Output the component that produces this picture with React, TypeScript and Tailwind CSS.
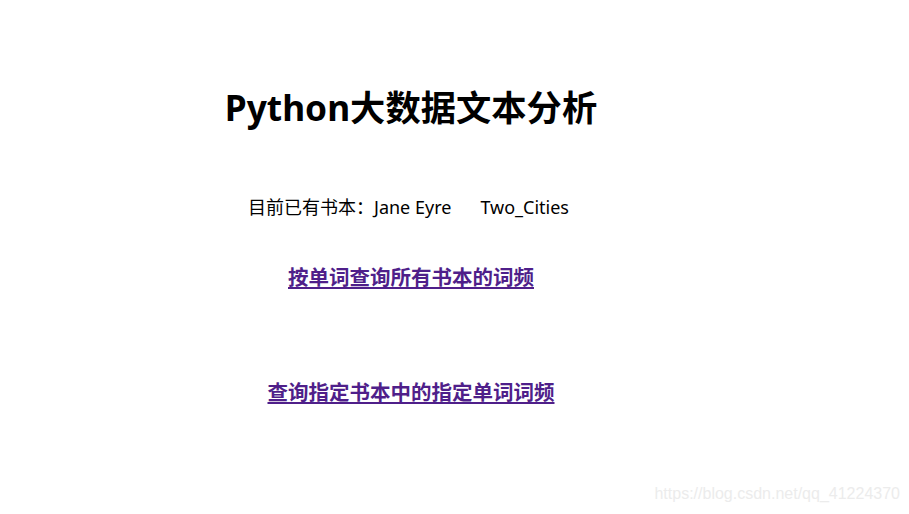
import React from "react";

export default function App() {
  const font = { fontFamily: '"Noto Sans", "Noto Sans CJK SC", sans-serif' };
  return (
    <div className="relative w-[909px] h-[514px] bg-white overflow-hidden" style={font}>
      <div className="w-[822px] flex flex-col items-center pt-[82px]">
        <h1 className="text-[35.3px] leading-[50px] font-bold text-black">Python大数据文本分析</h1>
        <p className="mt-[61px] text-[18px] leading-[28px] text-black mr-[5px]">
          目前已有书本：Jane Eyre<span className="inline-block w-[29px]"></span>Two_Cities
        </p>
        <a href="#" className="mt-[41px] text-[20.5px] leading-[30px] font-bold text-[#4f1f8a] underline">
          按单词查询所有书本的词频
        </a>
        <a href="#" className="mt-[85px] text-[20.5px] leading-[30px] font-bold text-[#4f1f8a] underline">
          查询指定书本中的指定单词词频
        </a>
      </div>
      <div className="absolute right-[9px] bottom-[10px] text-[16px] leading-[20px] text-[#ececec]" style={{ fontFamily: '"Liberation Sans", sans-serif' }}>
        https://blog.csdn.net/qq_41224370
      </div>
    </div>
  );
}
